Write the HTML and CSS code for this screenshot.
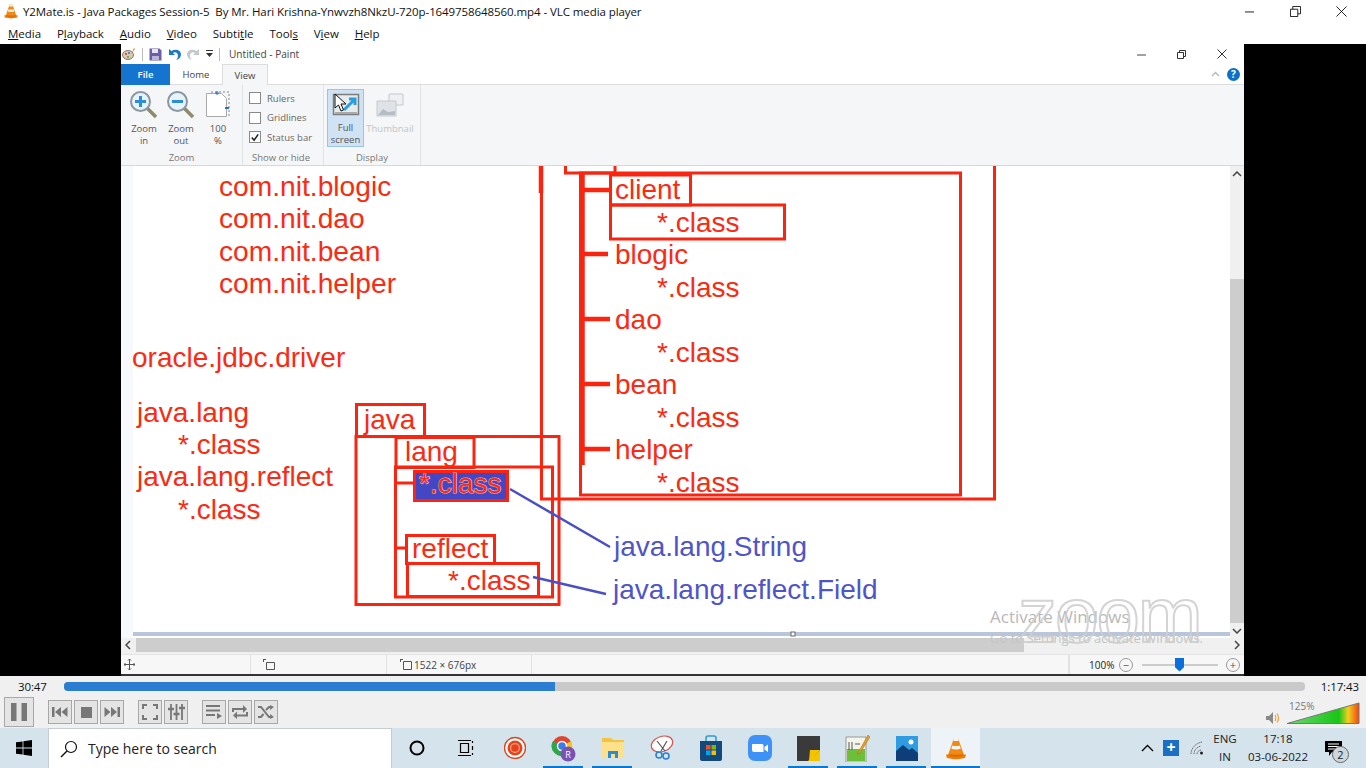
FILE: index.html
```html
<!DOCTYPE html>
<html lang="en">
<head>
<meta charset="utf-8">
<title>VLC media player</title>
<link rel="stylesheet" href="styles.css">
</head>
<body>
<svg class="defs" width="0" height="0" aria-hidden="true">
  <symbol id="cone" viewBox="0 0 24 24">
    <path d="M10 2h4l6 17H4z" fill="#f18a14"/>
    <path d="M8.300 9.500c2 .8 5.400 .8 7.400 0l1 3.200c-2.500 1-6.900 1-9.400 0zM10 2h4l.9 2.700c-1.500.5-4.300.5-5.800 0z" fill="#f4f4f4"/>
    <path d="M2 18.500h20l-.6 3c-.2 1-9.400 1.800-9.400 1.800s-9.200-.8-9.400-1.800z" fill="#ee7c08"/>
    <path d="M5.500 18c2 1.200 11 1.200 13 0l.5 1.500c-3 1.500-11 1.500-14 0z" fill="#d86a00"/>
  </symbol>
</svg>

<header class="titlebar">
  <svg class="title-cone"><use href="#cone"/></svg>
  <span class="title-text">Y2Mate.is - Java Packages Session-5  By Mr. Hari Krishna-Ynwvzh8NkzU-720p-1649758648560.mp4 - VLC media player</span>
  <div class="wincontrols">
    <svg width="11" height="11" viewBox="0 0 12 12"><path d="M1 6.500h10" stroke="#111" stroke-width="1"/></svg>
    <svg width="11" height="11" viewBox="0 0 12 12"><path d="M.5 3.500h8v8h-8zM3 3.500V.5h8.500v8H8.500" fill="none" stroke="#111"/></svg>
    <svg width="11" height="11" viewBox="0 0 12 12"><path d="M.5.500l11 11M11.500.5l-11 11" stroke="#111"/></svg>
  </div>
</header>
<nav class="menubar">
  <span><u>M</u>edia</span><span>P<u>l</u>ayback</span><span><u>A</u>udio</span><span><u>V</u>ideo</span><span>Subti<u>t</u>le</span><span>Tool<u>s</u></span><span>V<u>i</u>ew</span><span><u>H</u>elp</span>
</nav>

<main class="video">
  <section class="paint">
    <div class="paint-title">
      <svg class="qa-app" width="14" height="14" viewBox="0 0 14 14"><ellipse cx="6" cy="8" rx="5.500" ry="4.500" fill="#d9c9b0" stroke="#8a7a6a"/><circle cx="4" cy="7" r="1" fill="#c33"/><circle cx="7" cy="6" r="1" fill="#37c"/><circle cx="6" cy="10" r="1" fill="#3a3"/><path d="M9 7l3-6 1 1z" fill="#d8872a"/></svg>
      <i class="sep"></i>
      <svg width="13" height="13" viewBox="0 0 13 13"><path d="M.5.500h10l2 2v10H.5z" fill="#6a5ea8"/><path d="M3 1h6v4H3z" fill="#e6e6f2"/><path d="M3 8h7v4H3z" fill="#b9b4d8"/></svg>
      <svg width="13" height="13" viewBox="0 0 13 13"><path d="M1 1v6h6L5 5c2-1.500 5-.5 5 3 0 1.500-1 3-2 4 3-.5 5-3 5-5.500C13 2 7.500.5 3.500 3z" fill="#1f7ac4"/></svg>
      <svg width="13" height="13" viewBox="0 0 13 13"><path d="M12 1v6H6l2-2C6 3.500 3 4.500 3 8c0 1.500 1 3 2 4-3-.5-5-3-5-5.500C0 2 5.500.5 9.500 3z" fill="#c4c8cc"/></svg>
      <svg width="7" height="8" viewBox="0 0 7 8"><path d="M0 0h7v1H0zM0 3h7L3.500 7z" fill="#333"/></svg>
      <i class="sep"></i>
      <span class="paint-name">Untitled - Paint</span>
      <div class="paint-wincontrols">
        <svg width="9" height="9" viewBox="0 0 9 9"><path d="M0 5h9" stroke="#444"/></svg>
        <svg width="9" height="9" viewBox="0 0 9 9"><path d="M.5 2.500h6v6h-6zM2.500 2V.5h6v6H7" fill="none" stroke="#333"/></svg>
        <svg width="10" height="10" viewBox="0 0 10 10"><path d="M.5.500l9 9M9.500.5l-9 9" stroke="#333"/></svg>
      </div>
    </div>
    <div class="tabs">
      <span class="tab tab-file">File</span>
      <span class="tab tab-home">Home</span>
      <span class="tab tab-view">View</span>
      <div class="tabs-end">
        <svg width="9" height="6" viewBox="0 0 9 6"><path d="M1 5l3.500-3.500L8 5" fill="none" stroke="#bbb" stroke-width="1.500"/></svg>
        <span class="help">?</span>
      </div>
    </div>
    <div class="ribbon">
      <div class="group group-zoom">
        <div class="group-items">
          <div class="big">
            <svg width="30" height="30" viewBox="0 0 30 30"><path d="M18 18l9 9" stroke="#8e8a6c" stroke-width="3.500"/><circle cx="11.500" cy="11.500" r="9.500" fill="#e8f2fa" stroke="#8a97a3" stroke-width="2"/><path d="M6 11.500h11M11.500 6v11" stroke="#2a8fd8" stroke-width="3"/></svg>
            <span>Zoom<br>in</span>
          </div>
          <div class="big">
            <svg width="30" height="30" viewBox="0 0 30 30"><path d="M18 18l9 9" stroke="#8e8a6c" stroke-width="3.500"/><circle cx="11.500" cy="11.500" r="9.500" fill="#e8f2fa" stroke="#8a97a3" stroke-width="2"/><path d="M6 11.500h11" stroke="#2a8fd8" stroke-width="3"/></svg>
            <span>Zoom<br>out</span>
          </div>
          <div class="big">
            <svg width="30" height="30" viewBox="0 0 30 30"><path d="M3.500 3.500h15l5 5v18h-20z" fill="#fff" stroke="#a8a8a8"/><path d="M8 2h18v24" fill="none" stroke="#888" stroke-dasharray="2 2"/><path d="M12 3h4M14 1v4" stroke="#2a6fc0"/><path d="M22 18h4" stroke="#2a6fc0" stroke-width="2"/></svg>
            <span>100<br>%</span>
          </div>
        </div>
        <div class="group-label">Zoom</div>
      </div>
      <div class="group group-show">
        <div class="checks">
          <label class="check"><i class="box"></i>Rulers</label>
          <label class="check"><i class="box"></i>Gridlines</label>
          <label class="check"><i class="box"><svg width="11" height="11" viewBox="0 0 11 11"><path d="M2 5.500l2.500 3L9 2" fill="none" stroke="#222" stroke-width="1.700"/></svg></i>Status bar</label>
        </div>
        <div class="group-label">Show or hide</div>
      </div>
      <div class="group group-display">
        <div class="group-items">
          <div class="big full">
            <svg width="28" height="28" viewBox="0 0 28 28"><path d="M1.500 3.500h25v20h-25z" fill="#e6ebee" stroke="#7d7d7d" stroke-width="1.500"/><path d="M3 21h22v2H3z" fill="#aaa"/><path d="M12 19L23 8m-6 0h6v6" fill="none" stroke="#2a9fe0" stroke-width="3"/></svg>
            <span>Full<br>screen</span>
            <svg class="cursor" width="13" height="19" viewBox="0 0 13 19"><path d="M1 1v14l3.500-3 2.500 6 2.500-1-2.500-6H12z" fill="#fff" stroke="#111"/></svg>
          </div>
          <div class="big thumb">
            <svg width="30" height="28" viewBox="0 0 30 28"><path d="M14 2h14v11H14z" fill="#eef0f3" stroke="#c4c9cf"/><path d="M2 9h19v15H2z" fill="#dfe3e8" stroke="#c4c9cf"/><path d="M3 23l5-6 5 3 7-1v4z" fill="#b5bcc4"/></svg>
            <span>Thumbnail</span>
          </div>
        </div>
        <div class="group-label">Display</div>
      </div>
    </div>
    <div class="workspace">
      <div class="canvas-wrap">
        <svg class="drawing" width="1109" height="472" viewBox="121 166 1109 472">
          <rect x="121" y="166" width="12" height="472" fill="#f7f9fc"/>
          <g class="ink">
            <path d="M541.500 166V499H994.500V166"/>
            <path d="M541 166v27" class="thick"/>
            <path d="M565.500 166V173H615V166"/>
            <rect x="580.500" y="173" width="380" height="322"/>
            <path d="M582.500 173V465" class="thick"/>
            <path d="M582 190H610M582 254H608M582 319H610M582 384H610M582 449H610" class="thick"/>
            <rect x="610.500" y="175" width="80" height="30"/>
            <rect x="610.500" y="205" width="174" height="34"/>
            <rect x="356.500" y="404.500" width="68" height="32"/>
            <rect x="356" y="436.500" width="203" height="168"/>
            <rect x="396" y="437.500" width="78" height="30"/>
            <rect x="395.500" y="467" width="157" height="130"/>
            <path d="M395 483H414M395 548H406"/>
            <rect x="414.500" y="471.500" width="93" height="29" class="sel"/>
            <rect x="406.500" y="535.500" width="88" height="28"/>
            <rect x="407.500" y="563.500" width="131" height="33"/>
          </g>
          <g class="red">
            <text class="wide" x="219" y="196">com.nit.blogic</text>
            <text class="wide" x="219" y="228">com.nit.dao</text>
            <text class="wide" x="219" y="261">com.nit.bean</text>
            <text class="wide" x="219" y="293">com.nit.helper</text>
            <text x="132" y="367">oracle.jdbc.driver</text>
            <text x="137" y="422">java.lang</text>
            <text x="178" y="454">*.class</text>
            <text x="137" y="486">java.lang.reflect</text>
            <text x="178" y="519">*.class</text>
            <text x="615" y="199">client</text>
            <text x="657" y="232">*.class</text>
            <text x="615" y="264">blogic</text>
            <text x="657" y="297">*.class</text>
            <text x="615" y="329">dao</text>
            <text x="657" y="362">*.class</text>
            <text x="615" y="394">bean</text>
            <text x="657" y="427">*.class</text>
            <text x="615" y="459">helper</text>
            <text x="657" y="492">*.class</text>
            <text x="364" y="429">java</text>
            <text x="405" y="461">lang</text>
            <text class="sel-text" x="419" y="493">*.class</text>
            <text x="412" y="558">reflect</text>
            <text x="448" y="590">*.class</text>
          </g>
          <g class="blue">
            <path d="M510 489L610 547M533 577L606 594" class="blue-line"/>
            <text x="614" y="556">java.lang.String</text>
            <text x="613" y="599">java.lang.reflect.Field</text>
          </g>
          <path d="M133 634H1230" class="edge"/>
          <rect x="791" y="632" width="4" height="4" class="handle"/>
        </svg>
        <div class="vscroll">
          <svg width="10" height="6" viewBox="0 0 10 6"><path d="M1 5l4-4 4 4" fill="none" stroke="#444" stroke-width="1.500"/></svg>
          <div class="vtrack"><div class="vthumb"></div></div>
          <svg width="10" height="6" viewBox="0 0 10 6"><path d="M1 1l4 4 4-4" fill="none" stroke="#444" stroke-width="1.500"/></svg>
        </div>
      </div>
      <div class="hscroll">
        <svg width="6" height="10" viewBox="0 0 6 10"><path d="M5 1L1 5l4 4" fill="none" stroke="#444" stroke-width="1.500"/></svg>
        <div class="htrack"><div class="hthumb"></div></div>
        <svg width="6" height="10" viewBox="0 0 6 10"><path d="M1 1l4 4-4 4" fill="none" stroke="#444" stroke-width="1.500"/></svg>
      </div>
    </div>
    <div class="statusbar">
      <div class="st st-move"><svg width="11" height="11" viewBox="0 0 11 11"><path d="M5.500 0v11M0 5.500h11M4 1.500L5.500 0 7 1.500M4 9.500L5.500 11 7 9.500M1.500 4L0 5.500 1.500 7M9.500 4L11 5.500 9.500 7" fill="none" stroke="#555"/></svg></div>
      <div class="st st-sel"><svg width="12" height="11" viewBox="0 0 12 11"><path d="M3.500 3.500h8v7h-8z" fill="none" stroke="#555"/><path d="M.5 0v3M0 .5h3" stroke="#555"/></svg></div>
      <div class="st st-size"><svg width="12" height="11" viewBox="0 0 12 11"><path d="M3.500 2.500h8v8h-8z" fill="none" stroke="#555"/><path d="M.5 0v3M0 .5h3" stroke="#555"/></svg><span>1522 × 676px</span></div>
      <div class="st st-empty"></div>
      <div class="st st-zoom">
        <span class="pct">100%</span>
        <span class="round">−</span>
        <div class="slider"><i class="knob"></i></div>
        <span class="round">+</span>
      </div>
    </div>
    <div class="watermark">
      <span class="wm-a">Activate Windows</span>
      <span class="wm-b">Go to Settings to activate Windows.</span>
      <span class="wm-logo">zoom</span>
    </div>
  </section>
</main>

<section class="controls">
  <div class="seekrow">
    <span class="time time-l">30:47</span>
    <div class="seek"><div class="seek-fill"></div></div>
    <span class="time time-r">1:17:43</span>
  </div>
  <div class="btnrow">
    <button class="cbtn pause"><svg width="16" height="18" viewBox="0 0 16 18"><path d="M0 0h5.500v18H0zM10.500 0H16v18h-5.500z" fill="#777"/></svg></button>
    <div class="cgroup">
      <button class="cbtn"><svg width="16" height="10" viewBox="0 0 16 10"><path d="M0 0h2.500v10H0zM9 0v10L3 5zM15.500 0v10L9.500 5z" fill="#777"/></svg></button>
      <button class="cbtn"><svg width="11" height="11" viewBox="0 0 11 11"><path d="M0 0h11v11H0z" fill="#777"/></svg></button>
      <button class="cbtn"><svg width="16" height="10" viewBox="0 0 16 10"><path d="M16 0h-2.500v10H16zM7 0v10l6-5zM.5 0v10l6-5z" fill="#777"/></svg></button>
    </div>
    <div class="cgroup">
      <button class="cbtn"><svg width="16" height="16" viewBox="0 0 16 16"><path d="M1 5V1h4M11 1h4v4M15 11v4h-4M5 15H1v-4" fill="none" stroke="#777" stroke-width="2"/></svg></button>
      <button class="cbtn"><svg width="17" height="16" viewBox="0 0 17 16"><path d="M3 0v16M8.500 0v16M14 0v16" stroke="#777" stroke-width="1.800"/><path d="M0 5h6M5.500 10h6M11 4h6" stroke="#777" stroke-width="2.500"/></svg></button>
    </div>
    <div class="cgroup">
      <button class="cbtn"><svg width="16" height="14" viewBox="0 0 16 14"><path d="M0 1h14M0 5.500h14M0 10h9" stroke="#777" stroke-width="1.800"/><path d="M11 8l5 3-5 3z" fill="#777"/></svg></button>
      <button class="cbtn"><svg width="16" height="14" viewBox="0 0 16 14"><path d="M1 7V4h12M4 10.500h11V7" fill="none" stroke="#777" stroke-width="2"/><path d="M11 0l4 4-4 4zM5 6.500l-4 4 4 3.500z" fill="#777"/></svg></button>
      <button class="cbtn"><svg width="16" height="14" viewBox="0 0 16 14"><path d="M0 2h3l8 10h2M0 12h3l2.500-3M8 5l3-3h2" fill="none" stroke="#777" stroke-width="2"/><path d="M12 0l4 2-4 3zM12 9l4 3-4 2z" fill="#777"/></svg></button>
    </div>
    <div class="volume">
      <svg width="14" height="12" viewBox="0 0 14 12"><path d="M0 4h3l4-4v12L3 8H0z" fill="#888"/><path d="M9 3c1 1.500 1 4.500 0 6M11 1.500c2 2.500 2 6.500 0 9" fill="none" stroke="#f2a02b" stroke-width="1.200"/></svg>
      <div class="vol-bar">
        <svg width="74" height="22" viewBox="0 0 74 22"><defs><linearGradient id="vg"><stop offset="0" stop-color="#6fd96f"/><stop offset=".72" stop-color="#18c518"/><stop offset=".85" stop-color="#f2d020"/><stop offset="1" stop-color="#f0440f"/></linearGradient></defs><path d="M1 21.500L73 1v20.500z" fill="url(#vg)" stroke="#777"/></svg>
        <span class="vol-pct">125%</span>
      </div>
    </div>
  </div>
</section>

<footer class="taskbar">
  <div class="start"><svg width="16" height="16" viewBox="0 0 16 16"><path d="M0 2.300l6.600-.9v6.200H0zM7.400 1.300L16 0v7.600H7.400zM0 8.400h6.600v6.200L0 13.700zM7.400 8.400H16V16l-8.600-1.300z" fill="#000"/></svg></div>
  <div class="search">
    <svg width="18" height="18" viewBox="0 0 18 18"><circle cx="11" cy="7" r="5.500" fill="none" stroke="#111" stroke-width="1.200"/><path d="M7 11l-6 6" stroke="#111" stroke-width="1.400"/></svg>
    <span>Type here to search</span>
  </div>
  <div class="apps">
    <div class="app"><svg width="16" height="16" viewBox="0 0 16 16"><circle cx="8" cy="8" r="6.500" fill="none" stroke="#000" stroke-width="2"/></svg></div>
    <div class="app"><svg width="17" height="16" viewBox="0 0 17 16"><path d="M3.500 3.500h8v9h-8zM1 .5h13M1 15.500h13M15.500 1v2M15.500 6v4M15.500 13v2" fill="none" stroke="#000" stroke-width="1.200"/></svg></div>
    <div class="app"><svg width="22" height="24" viewBox="0 0 22 24"><circle cx="11" cy="12" r="10.500" fill="#fff" stroke="#d84a24" stroke-width="1.400"/><circle cx="11" cy="12" r="7.500" fill="#e8421c"/><circle cx="11" cy="12" r="5" fill="#f4a58c"/><circle cx="11" cy="12" r="3.800" fill="#e8421c"/></svg></div>
    <div class="app running"><svg width="26" height="28" viewBox="0 0 26 28"><circle cx="11" cy="12" r="10" fill="#e0452f"/><path d="M11 12L20 7a10 10 0 0 1-5 14z" fill="#f5c518"/><path d="M11 12l4 9A10 10 0 0 1 2 7z" fill="#2ea64a"/><circle cx="11" cy="12" r="4.500" fill="#3b7de8" stroke="#fff" stroke-width="1.500"/><circle cx="17" cy="20" r="7.500" fill="#7952b3"/><text x="17" y="23.500" class="avatar">R</text></svg></div>
    <div class="app running"><svg width="22" height="22" viewBox="0 0 22 22"><path d="M0 1h9l2 2h11v18H0z" fill="#f4c33f"/><path d="M0 5h22v16H0z" fill="#fde08a"/><path d="M6 14h10v7H6z" fill="#2a8dd4"/><path d="M9 17h4v4H9z" fill="#fde08a"/></svg></div>
    <div class="app"><svg width="24" height="26" viewBox="0 0 24 26"><ellipse cx="12" cy="9" rx="11" ry="7.500" fill="#fff" stroke="#d9534f" stroke-width="1.200" transform="rotate(-20 12 9)"/><path d="M7 6l8 10M17 6l-6 10" stroke="#555" stroke-width="1.200"/><circle cx="9" cy="20" r="3" fill="none" stroke="#2a7fd0" stroke-width="1.500"/><circle cx="16" cy="21" r="3" fill="none" stroke="#2a7fd0" stroke-width="1.500"/></svg></div>
    <div class="app"><svg width="24" height="27" viewBox="0 0 24 27"><path d="M7 6V3a2 2 0 0 1 2-2h6a2 2 0 0 1 2 2v3" fill="none" stroke="#2c9ad8" stroke-width="1.500"/><path d="M1 6h22v18a2 2 0 0 1-2 2H3a2 2 0 0 1-2-2z" fill="#14497c"/><path d="M7 10h4.500v4.500H7z" fill="#f25022"/><path d="M12.500 10H17v4.500h-4.500z" fill="#7fba00"/><path d="M7 15.500h4.500V20H7z" fill="#00a4ef"/><path d="M12.500 15.500H17V20h-4.500z" fill="#ffb900"/></svg></div>
    <div class="app"><svg width="24" height="26" viewBox="0 0 24 26"><rect width="24" height="26" y="0" rx="7" fill="#3e91f6"/><path d="M4 9h10a1.500 1.500 0 0 1 1.500 1.500V17H6a2 2 0 0 1-2-2zM16.500 12L20 9.500v7.500l-3.500-2.500z" fill="#fff"/></svg></div>
    <div class="app running"><svg width="23" height="25" viewBox="0 0 23 25"><path d="M0 0h23v25H0z" fill="#3a3a3a"/><path d="M11 25l12-11v11z" fill="#f5c400"/><path d="M13 14h10L12 25z" fill="#f5c400"/></svg></div>
    <div class="app running"><svg width="25" height="28" viewBox="0 0 25 28"><path d="M1 3h20v25H1z" fill="#f4f4ea" stroke="#999"/><path d="M2 15h18v12H2z" fill="#6cbf3a"/><path d="M4 8v8M7 8v8M10 10h5" stroke="#555"/><path d="M23 1L14 17l-2 3 3-1L25 3z" fill="#e0a030" stroke="#a86c14" stroke-width=".5"/></svg></div>
    <div class="app running"><svg width="22" height="25" viewBox="0 0 22 25"><path d="M0 0h22v25H0z" fill="#2f9be0"/><path d="M0 25V15l7-6 6 5 3-2 6 5v8z" fill="#0f3d78"/><circle cx="15" cy="6" r="2.500" fill="#fff"/></svg></div>
    <div class="app running active"><svg width="24" height="26"><use href="#cone"/></svg></div>
  </div>
  <div class="tray">
    <svg class="tray-up" width="13" height="8" viewBox="0 0 13 8"><path d="M1 7l5.500-5.500L12 7" fill="none" stroke="#000" stroke-width="1.300"/></svg>
    <div class="plus">+</div>
    <svg class="tray-wifi" width="15" height="14" viewBox="0 0 15 14"><path d="M1 13C1 7 6 2 12 1M4 13c0-4 3-7 7-8M7 13c0-2 1.500-3.500 4-4" fill="none" stroke="#666" stroke-dasharray="1.500 .8"/><circle cx="11.500" cy="12" r="1.500" fill="#222"/></svg>
    <div class="lang">ENG<br>IN</div>
    <div class="clock">17:18<br>03-06-2022</div>
    <div class="notif">
      <svg width="17" height="15" viewBox="0 0 17 15"><path d="M0 0h17v11H7l-3 4v-4H0z" fill="#000"/><path d="M3 3h11M3 5.500h11M3 8h7" stroke="#fff"/></svg>
      <span class="notif-n">2</span>
    </div>
  </div>
</footer>
</body>
</html>
```

FILE: styles.css
```css
* { box-sizing: border-box; }
html, body { margin: 0; padding: 0; }
body {
  width: 1366px;
  height: 768px;
  overflow: hidden;
  display: flex;
  flex-direction: column;
  background: #000;
  font-family: "Open Sans", "Noto Sans", sans-serif;
  color: #111;
}
.defs { position: absolute; }

.titlebar {
  height: 22px;
  background: #fff;
  display: flex;
  align-items: center;
  padding-left: 3px;
  flex: none;
}
.title-cone { width: 16px; height: 16px; margin-right: 4px; }
.title-text { font-size: 11.500px; white-space: pre; letter-spacing: -.08px; }
.wincontrols { margin-left: auto; display: flex; gap: 35px; padding-right: 19px; padding-top: 1px; }

.menubar {
  height: 22px;
  background: #fff;
  display: flex;
  align-items: center;
  gap: 15.800px;
  padding-left: 8px;
  font-size: 11.500px;
  flex: none;
}

.video {
  flex: none;
  height: 632px;
  background: #000;
  padding-left: 121px;
  padding-right: 122px;
}
.paint {
  position: relative;
  height: 632px;
  background: #fff;
  display: flex;
  flex-direction: column;
  color: #555;
  font-size: 9.500px;
}
.paint-title {
  height: 20px;
  display: flex;
  align-items: center;
  gap: 6px;
  color: #444;
  flex: none;
}
.qa-app { margin-left: 1px; }
.sep { width: 1px; height: 13px; background: #bbb; }
.paint-name { font-size: 10.100px; margin-left: 3px; }
.paint-wincontrols { margin-left: auto; display: flex; align-items: center; gap: 31px; padding-right: 17px; }

.tabs { height: 21px; display: flex; align-items: stretch; border-bottom: 1px solid #dcdcdc; flex: none; }
.tab { display: flex; align-items: center; justify-content: center; }
.tab-file { width: 49px; background: #1474ce; color: #fff; font-weight: 600; margin-bottom: -1px; }
.tab-home { width: 52px; color: #444; }
.tab-view { width: 46px; color: #444; background: #f5f6f7; border: 1px solid #dcdcdc; border-bottom: 0; margin-bottom: -1px; }
.tabs-end { margin-left: auto; display: flex; align-items: center; gap: 7px; padding-right: 4px; }
.help { width: 13px; height: 13px; border-radius: 50%; background: #0c70c8; color: #fff; font-size: 10px; font-weight: 700; display: flex; align-items: center; justify-content: center; }

.ribbon { height: 81px; background: #f5f6f7; display: flex; border-bottom: 1px solid #d8d8d8; flex: none; }
.group { display: flex; flex-direction: column; justify-content: space-between; border-right: 1px solid #e2e3e4; }
.group-items { display: flex; }
.group-label { height: 15px; text-align: center; color: #777; font-size: 9.500px; line-height: 16px; flex: none; }
.group-zoom { width: 122px; }
.group-zoom .group-items { padding-left: 5px; gap: 1px; padding-top: 5px; }
.group-show { width: 81px; }
.group-show .group-label { padding-right: 4px; }
.group-display { width: 97px; }
.group-display .group-items { padding: 4px 0 0 3px; gap: 1px; }
.big { width: 36px; display: flex; flex-direction: column; align-items: center; text-align: center; line-height: 12px; font-size: 9.500px; color: #555; gap: 3px; }
.big svg { flex: none; }
.big.full { position: relative; width: 37px; height: 58px; background: #cfe3f5; border: 1px solid #9dc3e6; padding-top: 1px; }
.big .cursor { position: absolute; left: 6px; top: 3px; }
.big.thumb { width: 50px; color: #c2c4c6; padding-top: 3px; }
.checks { display: flex; flex-direction: column; padding: 7px 0 0 6px; gap: 7.500px; }
.check { display: flex; align-items: center; gap: 6px; height: 12px; color: #666; }
.box { width: 12px; height: 12px; border: 1px solid #8a8a8a; background: #fff; display: flex; align-items: center; justify-content: center; }

.workspace { flex: none; height: 488px; display: flex; flex-direction: column; }
.canvas-wrap { display: flex; height: 472px; flex: none; }
.drawing { display: block; flex: none; }
.ink rect, .ink path { fill: none; stroke: #fb2410; stroke-width: 3; }
.ink .thick { stroke-width: 4.500; }
.ink .sel { fill: #4347c4; }
.red text { fill: #fb2a12; font: 28px "Liberation Sans", Arial, sans-serif; }
.red .wide { font-size: 28.200px; }
.red .sel-text { stroke: #d9b8e0; stroke-width: 1.200px; paint-order: stroke; }
.blue text { fill: #4f55c8; font: 28px "Liberation Sans", Arial, sans-serif; }
.blue-line { fill: none; stroke: #4a50c4; stroke-width: 2.500; }
.edge { stroke: #b9c5da; stroke-width: 4; fill: none; }
.handle { fill: #fff; stroke: #666; stroke-width: 1; }
.vscroll { width: 14px; background: #f0f0f0; display: flex; flex-direction: column; align-items: center; justify-content: space-between; padding: 5px 0 4px; }
.vtrack { flex: 1; width: 14px; padding-top: 102px; padding-bottom: 5px; display: flex; }
.vthumb { flex: 1; background: #cdcdcd; }
.hscroll { height: 16px; background: #f0f0f0; display: flex; align-items: center; padding: 0 4px 2px; flex: none; }
.htrack { flex: 1; padding: 0 210px 0 5px; height: 14px; }
.hthumb { height: 14px; background: #cdcdcd; }

.statusbar { flex: none; height: 22px; display: flex; background: #f7f7f7; border-top: 1px solid #e4e4e4; border-bottom: 2px solid #333; color: #444; font-size: 10px; }
.st { display: flex; align-items: center; border-right: 1px solid #e2e2e2; height: 100%; }
.st-move { width: 130px; padding-left: 3px; }
.st-sel { width: 136px; padding-left: 12px; }
.st-size { width: 145px; padding-left: 13px; gap: 2px; }
.st-empty { flex: 1; }
.st-zoom { width: 175px; border: 0; border-left: 1px solid #e2e2e2; padding-left: 19px; }
.pct { width: 30px; color: #222; }
.round { width: 14px; height: 14px; border-radius: 50%; border: 1px solid #999; display: flex; align-items: center; justify-content: center; font-size: 11px; line-height: 1; color: #555; flex: none; }
.slider { position: relative; width: 76px; height: 2px; margin: 0 8px 0 9px; background: #ccc; flex: none; }
.knob { position: absolute; left: 33px; top: -6px; width: 9px; height: 14px; background: #0a6fdc; clip-path: polygon(0 0, 100% 0, 100% 70%, 50% 100%, 0 70%); }

.watermark { position: absolute; left: 869px; top: 550px; width: 240px; height: 52px; pointer-events: none; }
.wm-logo { position: absolute; left: 28px; top: -18px; font: 78px/78px "Liberation Sans", Arial, sans-serif; letter-spacing: -2px; color: transparent; -webkit-text-stroke: 2px rgba(205,205,205,.85); }
.wm-a { position: absolute; left: 0; top: 13px; font-size: 17px; line-height: 20px; color: #b8b8b8; white-space: nowrap; }
.wm-b { position: absolute; left: 0; top: 36px; font-size: 13px; line-height: 16px; color: #c4c4c4; white-space: nowrap; }

.controls { height: 52px; background: #f0f0f0; flex: none; display: flex; flex-direction: column; }
.seekrow { height: 20px; position: relative; display: flex; align-items: center; padding: 0 7px 0 18px; flex: none; }
.time { font-size: 11.500px; color: #111; letter-spacing: -.1px; }
.seek { flex: 1; height: 9px; margin: 0 16px 0 17px; border-radius: 4px; background: #c9c9c9; overflow: hidden; }
.seek-fill { width: 491px; height: 9px; background: #2a7dd0; }
.time-l { width: 29px; }
.btnrow { flex: 1; display: flex; align-items: center; padding-left: 4px; position: relative; gap: 14px; }
.cgroup { display: flex; gap: 2px; }
.cbtn { width: 24px; height: 24px; padding: 0; background: #e4e4e4; border: 1px solid #a8a8a8; display: flex; align-items: center; justify-content: center; }
.pause { width: 30px; height: 30px; }
.volume { margin-left: auto; display: flex; align-items: flex-end; gap: 6px; margin-right: 6px; height: 24px; }
.vol-bar { position: relative; width: 74px; height: 22px; }
.vol-pct { position: absolute; left: 3px; top: -3px; font-size: 10px; color: #777; }

.taskbar { height: 40px; background: #d4e3ec; display: flex; flex: none; }
.start { width: 48px; flex: none; display: flex; align-items: center; justify-content: center; }
.search { width: 344px; flex: none; background: #fff; border: 1px solid #c6cdd2; border-bottom: 0; display: flex; align-items: center; padding-left: 11px; gap: 10px; font-size: 14px; color: #222; }
.apps { display: flex; flex: none; }
.app { width: 49px; height: 40px; position: relative; display: flex; align-items: center; justify-content: center; }
.running::after { content: ""; position: absolute; left: 4px; right: 5px; bottom: 0; height: 2px; background: #0a78d0; }
.active { background: #edf3f6; }
.active::after { left: 0; right: 0; }
.avatar { fill: #fff; font: 9px "Open Sans", sans-serif; text-anchor: middle; }
.tray { flex: 1; display: flex; align-items: center; padding-left: 161px; font-size: 11.500px; color: #222; }
.plus { width: 16px; height: 16px; margin-left: 9px; background: #1a6fc4; color: #fff; font-size: 16px; font-weight: 700; line-height: 15px; text-align: center; }
.tray-wifi { margin-left: 11px; }
.lang { margin-left: 5px; width: 30px; text-align: center; line-height: 18px; }
.clock { margin-left: 8px; width: 60px; text-align: center; line-height: 18px; white-space: nowrap; }
.notif { position: relative; margin-left: 10px; width: 30px; height: 30px; }
.notif svg { position: absolute; left: 7px; top: 8px; }
.notif-n { position: absolute; left: 14px; top: 13px; width: 17px; height: 17px; border-radius: 50%; border: 1px solid #666; background: #cfd8dc; font-size: 11px; line-height: 15px; text-align: center; }
```
